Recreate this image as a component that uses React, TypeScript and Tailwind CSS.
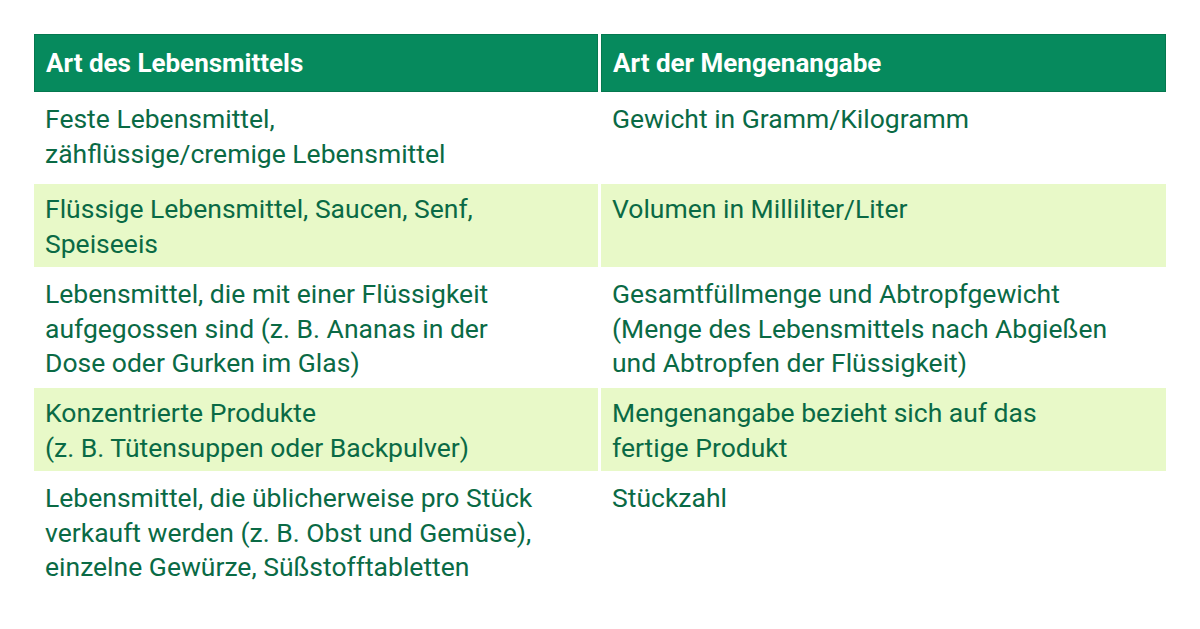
import React from "react";

type Row = { food: string[]; amount: string[]; shaded?: boolean; height: string };

const rows: Row[] = [
  {
    food: ["Feste Lebensmittel,", "zähflüssige/cremige Lebensmittel"],
    amount: ["Gewicht in Gramm/Kilogramm"],
    height: "h-[88px]",
  },
  {
    food: ["Flüssige Lebensmittel, Saucen, Senf,", "Speiseeis"],
    amount: ["Volumen in Milliliter/Liter"],
    shaded: true,
    height: "h-[83px]",
  },
  {
    food: ["Lebensmittel, die mit einer Flüssigkeit", "aufgegossen sind (z. B. Ananas in der", "Dose oder Gurken im Glas)"],
    amount: ["Gesamtfüllmenge und Abtropfgewicht", "(Menge des Lebensmittels nach Abgießen", "und Abtropfen der Flüssigkeit)"],
    height: "h-[117px]",
  },
  {
    food: ["Konzentrierte Produkte", "(z. B. Tütensuppen oder Backpulver)"],
    amount: ["Mengenangabe bezieht sich auf das", "fertige Produkt"],
    shaded: true,
    height: "h-[83px]",
  },
  {
    food: ["Lebensmittel, die üblicherweise pro Stück", "verkauft werden (z. B. Obst und Gemüse),", "einzelne Gewürze, Süßstofftabletten"],
    amount: ["Stückzahl"],
    height: "h-[117px]",
  },
];

function Cell({ lines, shaded, height }: { lines: string[]; shaded?: boolean; height: string }) {
  return (
    <div className={`${height} px-[11px] pt-[8px] text-[26.5px] leading-[34.5px] text-[#0a6a45] ${shaded ? "bg-[#e8f9c8]" : "bg-white"}`}>
      {lines.map((l, i) => (
        <div key={i} className="whitespace-nowrap">{l}</div>
      ))}
    </div>
  );
}

export default function App() {
  return (
    <div className="w-[1200px] h-[629px] bg-white pt-[34px] pl-[34px]" style={{ fontFamily: "Roboto, 'Liberation Sans', sans-serif" }}>
      <div className="grid grid-cols-[564px_565px] gap-x-[3px] gap-y-[2px]">
        <div className="h-[58px] flex items-center px-[11px] bg-[#068a5d] border border-[#05784f] text-white font-bold text-[26px]">
          Art des Lebensmittels
        </div>
        <div className="h-[58px] flex items-center px-[11px] bg-[#068a5d] border border-[#05784f] text-white font-bold text-[26px]">
          Art der Mengenangabe
        </div>
        {rows.map((r, i) => (
          <React.Fragment key={i}>
            <Cell lines={r.food} shaded={r.shaded} height={r.height} />
            <Cell lines={r.amount} shaded={r.shaded} height={r.height} />
          </React.Fragment>
        ))}
      </div>
    </div>
  );
}
